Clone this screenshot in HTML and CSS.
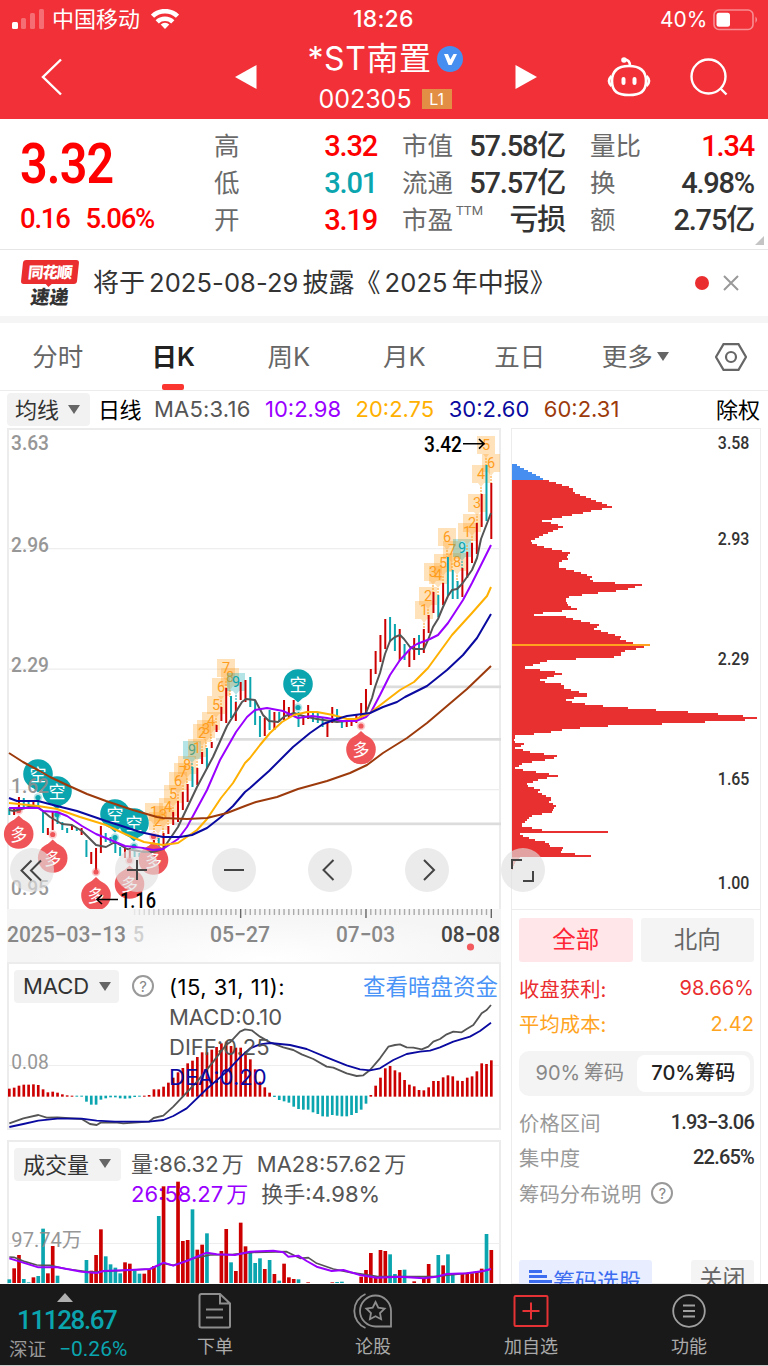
FILE: index.html
```html
<!DOCTYPE html>
<html lang="zh-CN">
<head>
    <meta charset="UTF-8">
    <title>*ST南置 002305</title>
    <link rel="stylesheet" href="styles.css">
</head>
<body>
    <!-- Barra de estado y cabecera -->
    <header class="top">
        <div class="status">
            <svg class="signal" width="32" height="20" viewBox="0 0 32 20">
                <rect x="0" y="13" width="6" height="7" rx="1.5" fill="#fff"/>
                <rect x="9" y="9" width="5" height="11" rx="1.5" fill="#fff" opacity=".3"/>
                <rect x="18" y="4" width="5" height="16" rx="1.5" fill="#fff" opacity=".3"/>
                <rect x="27" y="0" width="5" height="20" rx="1.5" fill="#fff" opacity=".3"/>
            </svg>
            <span class="carrier">中国移动</span>
            <svg class="wifi" width="28" height="20" viewBox="0 0 28 20" fill="none" stroke="#fff" stroke-width="4.600">
                <path d="M1.5 7.2a18 18 0 0 1 25 0"/>
                <path d="M6.2 12.800a11.300 11.300 0 0 1 15.600 0"/>
                <path d="M14 20l-4.300-4.500a6.200 6.200 0 0 1 8.600 0z" fill="#fff" stroke="none"/>
            </svg>
            <span class="time">18:26</span>
            <span class="battery-text">40%</span>
            <svg class="battery" width="46" height="22" viewBox="0 0 46 22">
                <rect x="1" y="1" width="39" height="19.500" rx="5" fill="none" stroke="#fff" stroke-width="1.600" opacity=".45"/>
                <rect x="3.500" y="3.800" width="13.500" height="14" rx="2.500" fill="#fff"/>
                <path d="M42.500 7.500q3 3.200 0 6.500z" fill="#fff" opacity=".5"/>
            </svg>
        </div>
        <div class="nav">
            <svg class="back" width="22" height="38" viewBox="0 0 22 38" fill="none" stroke="#fff" stroke-width="2.400"><path d="M20 1.500L2 19l18 17.500"/></svg>
            <svg class="prev" width="22" height="24" viewBox="0 0 22 24"><path d="M0 12L21.500 0v24z" fill="#fff"/></svg>
            <div class="title">
                <div class="stock-name">*ST南置
                    <svg width="26" height="26" viewBox="0 0 26 26"><circle cx="13" cy="13" r="13" fill="#468ff0"/><path d="M7 8h4l2.300 5.500L16.500 8h3.500l-5.500 11h-3z" fill="#fff"/></svg>
                </div>
                <div class="stock-code">002305 <span class="level">L1</span></div>
            </div>
            <svg class="next" width="22" height="24" viewBox="0 0 22 24"><path d="M22 12L.5 0v24z" fill="#fff"/></svg>
            <svg class="robot" width="44" height="40" viewBox="0 0 44 40" fill="none" stroke="#fff" stroke-width="2.600">
                <path d="M22 9c10 0 17 4 17 15s-6 14-17 14S5 35 5 24 12 9 22 9z"/>
                <path d="M4.500 19q-5 5 0 10M39.500 19q5 5 0 10M23 9q0-6-5-6.500"/>
                <circle cx="17" cy="3" r="1.500" fill="#fff"/>
                <path d="M16.500 22v4M27.500 22v4" stroke-width="4" stroke-linecap="round"/>
            </svg>
            <svg class="search" width="38" height="38" viewBox="0 0 38 38" fill="none" stroke="#fff" stroke-width="2.400"><circle cx="18.500" cy="18.500" r="17"/><path d="M30 30l6.500 6.500"/></svg>
        </div>
    </header>

    <!-- Cotización -->
    <section class="quote">
        <div class="price">
            <div class="last">3.32</div>
            <div class="change"><span>0.16</span><span>5.06%</span></div>
        </div>
        <dl>
            <dt>高</dt><dd class="up">3.32</dd>
            <dt>低</dt><dd class="down">3.01</dd>
            <dt>开</dt><dd class="up">3.19</dd>
        </dl>
        <dl>
            <dt>市值</dt><dd>57.58亿</dd>
            <dt>流通</dt><dd>57.57亿</dd>
            <dt>市盈<sup>TTM</sup></dt><dd>亏损</dd>
        </dl>
        <dl>
            <dt>量比</dt><dd class="up">1.34</dd>
            <dt>换</dt><dd>4.98%</dd>
            <dt>额</dt><dd>2.75亿</dd>
        </dl>
        <i class="corner"></i>
    </section>

    <section class="notice">
        <div class="brand"><b>同花顺</b><em>速递</em></div>
        <p>将于<span>2025-08-29</span>披露《<span>2025</span>年中报》</p>
        <i class="dot"></i>
        <svg width="16" height="16" viewBox="0 0 16 16" stroke="#999" stroke-width="2"><path d="M1 1l14 14M15 1L1 15"/></svg>
    </section>

    <!-- Periodos -->
    <nav class="tabs">
        <a>分时</a>
        <a class="active">日K</a>
        <a>周K</a>
        <a>月K</a>
        <a>五日</a>
        <a>更多<i class="caret"></i></a>
        <a class="settings">
            <svg width="32" height="28" viewBox="0 0 32 28" fill="none" stroke="#666" stroke-width="2.200"><path d="M8.500 1.200h15L31 14l-7.500 12.800h-15L1 14z"/><circle cx="16" cy="14" r="5"/></svg>
        </a>
    </nav>

    <div class="ma-row">
        <span class="select">均线<i class="caret"></i></span>
        <span class="period">日线</span>
        <span class="ma5">MA5:3.16</span>
        <span class="ma10">10:2.98</span>
        <span class="ma20">20:2.75</span>
        <span class="ma30">30:2.60</span>
        <span class="ma60">60:2.31</span>
        <span class="adjust">除权</span>
    </div>

    <main class="board">
        <div class="left">
            <div class="kline">
                <svg id="kline" width="494" height="481" viewBox="7 428 494 481"></svg>
                <div class="tools">
                    <button><svg viewBox="0 0 44 44"><path d="M21.500 12.500L11.500 22.500l10 10M31 12.500L21 22.500l10 10"/></svg></button>
                    <button><svg viewBox="0 0 44 44"><path d="M12 22h20M22 12v20"/></svg></button>
                    <button><svg viewBox="0 0 44 44"><path d="M12 22h20"/></svg></button>
                    <button><svg viewBox="0 0 44 44"><path d="M25.500 12L15.500 22l10 10"/></svg></button>
                    <button><svg viewBox="0 0 44 44"><path d="M19 12l10 10-10 10"/></svg></button>
                    <button><svg viewBox="0 0 44 44"><path d="M11 21V12h10M32 23v10H22" stroke-width="2.600"/></svg></button>
                </div>
            </div>
            <svg id="axis" class="axis" width="494" height="53" viewBox="7 909 494 53"></svg>

            <div class="panel macd">
                <svg id="macd" class="plot" width="494" height="168" viewBox="21 21 1482 504"></svg>
                <span class="select">MACD<i class="caret"></i></span>
                <span class="help">?</span>
                <div class="values">
                    <div class="params">(15, 31, 11):</div>
                    <div>MACD:0.10</div>
                    <div>DIFF:0.25</div>
                    <div class="ma30">DEA:0.20</div>
                </div>
                <a class="link">查看暗盘资金</a>
            </div>

            <div class="panel volume">
                <svg id="volume" class="plot" width="494" height="143" viewBox="21 15 1482 429"></svg>
                <span class="select">成交量<i class="caret"></i></span>
                <div class="values">
                    <div><span>量:86.32 万</span><span>MA28:57.62 万</span></div>
                    <div><span class="ma10">26:58.27 万</span><span>换手:4.98%</span></div>
                </div>
            </div>
        </div>

        <!-- Distribución de fichas -->
        <aside class="right">
            <svg id="chips" class="chips" width="250" height="482" viewBox="18 -6 750 1446"></svg>
            <div class="chip-info">
                <div class="switch"><span class="on">全部</span><span>北向</span></div>
                <div class="row profit"><span>收盘获利:</span><span class="num">98.66%</span></div>
                <div class="row cost"><span>平均成本:</span><span class="num">2.42</span></div>
                <div class="segment"><span>90% 筹码</span><span class="on">70%筹码</span></div>
                <div class="row gray"><span>价格区间</span><b>1.93−3.06</b></div>
                <div class="row gray"><span>集中度</span><b>22.65%</b></div>
                <div class="row gray explain"><span>筹码分布说明</span><span class="help">?</span></div>
                <div class="actions">
                    <span class="pick"><svg width="24" height="24" viewBox="0 0 24 24" fill="#3c6df0"><path d="M0 1h13v3H0zM0 6h18v3H0zM0 11h23v3H0zM0 16h16v3H0z"/></svg>筹码选股</span>
                    <span class="close">关闭</span>
                </div>
            </div>
        </aside>
    </main>

    <footer class="bottom">
        <div class="index">
            <i class="arrow"></i>
            <div class="point">11128.67</div>
            <div class="rate"><span>深证</span>−0.26%</div>
        </div>
        <a>
            <svg width="34" height="36" viewBox="0 0 34 36" fill="none" stroke="#8e8e8e" stroke-width="2"><path d="M1.500 3q0-2 2-2H22l10 9.500V33q0 1.500-1.500 1.500h-27q-2 0-2-1.500zM22 1v9.500h10M8 16.500h17M8 24.500h17"/></svg>
            下单
        </a>
        <a>
            <svg width="40" height="36" viewBox="0 0 40 36" fill="none" stroke="#8e8e8e" stroke-width="1.800"><path d="M22.500 2.500A15.500 15.500 0 0 0 22.500 33.500H38V18A15.500 15.500 0 0 0 22.500 2.500zM12.500 1a18.500 18.500 0 0 0 0 34"/><path d="M22.500 9l2.800 5.700 6.300.9-4.600 4.400 1.100 6.200-5.600-2.900-5.600 2.900 1.100-6.200-4.600-4.400 6.300-.9z"/></svg>
            论股
        </a>
        <a>
            <svg width="36" height="36" viewBox="0 0 36 36" fill="none" stroke="#e63234" stroke-width="2"><rect x="1.500" y="3" width="33" height="30" rx="1"/><path d="M9.500 18h17M18 9.500v17"/></svg>
            加自选
        </a>
        <a>
            <svg width="36" height="36" viewBox="0 0 36 36" fill="none" stroke="#a0a0a0" stroke-width="1.800"><circle cx="18" cy="18" r="15.800"/><path d="M12 12.500h12M12 18h12M12 23.500h12"/></svg>
            功能
        </a>
    </footer>

    <script src="charts.js"></script>
</body>
</html>
```
FILE: styles.css
```css
* {
    box-sizing: border-box;
}

body {
    margin: 0;
    width: 768px;
    height: 1366px;
    overflow: hidden;
    display: flex;
    flex-direction: column;
    background-color: #fff;
    color: #333;
    font-family: Inter, "Noto Sans CJK SC", sans-serif;
    font-size: 22px;
}

svg {
    display: block;
    flex-shrink: 0;
}

i, em {
    font-style: normal;
}

/* Cabecera */
.top {
    height: 119px;
    background-color: #f13038;
    color: #fff;
}

.status {
    display: grid;
    grid-template-columns: 40px 98px 203px 304px 55px 46px;
    height: 39px;
    padding-left: 12px;
    align-items: center;
    line-height: 39px;
}

.signal {
    margin-top: -1px;
}

.wifi {
    margin-left: 1px;
    margin-top: -2px;
}

.time {
    font-size: 23px;
    font-weight: 500;
    letter-spacing: 0.2px;
}

.battery-text {
    font-size: 21px;
    margin-left: 3px;
}

.battery {
    margin-left: 1px;
}

.nav {
    display: grid;
    grid-template-columns: 195px 65px 250px 95px 82px 40px;
    height: 80px;
    padding-left: 41px;
    align-items: center;
}

.nav > svg {
    margin-top: -4px;
}

.nav .prev {
    margin-left: -1px;
}

.nav .next {
    margin-left: -36px;
    justify-self: start;
}

.nav .robot {
    margin-left: -39px;
}

.nav .search {
    margin-left: -38px;
}

.title {
    width: 168px;
    height: 80px;
    text-align: center;
}

.stock-name {
    display: flex;
    align-items: center;
    justify-content: center;
    gap: 5px;
    height: 40px;
    font-size: 32px;
    line-height: 38px;
    letter-spacing: 0.6px;
}

.stock-code {
    display: flex;
    align-items: center;
    justify-content: center;
    gap: 10px;
    height: 40px;
    font-size: 25px;
}

.level {
    width: 30px;
    height: 20px;
    background-color: #e28e45;
    font-size: 16px;
    line-height: 20px;
}

/* Cotización */
.quote {
    position: relative;
    display: grid;
    grid-template-columns: 170px 164px 164px 165px;
    column-gap: 24px;
    height: 131px;
    padding: 9px 0 0 20px;
    border-bottom: 1px solid #e6e6e6;
    font-family: Roboto, "Noto Sans CJK SC", sans-serif;
}

.last {
    height: 72px;
    font-size: 55px;
    font-weight: 600;
    line-height: 72px;
    letter-spacing: -1px;
    color: #fe0000;
    transform: scaleX(0.88);
    transform-origin: left;
}

.change {
    display: flex;
    gap: 16px;
    font-size: 28px;
    font-weight: 500;
    line-height: 37px;
    letter-spacing: -1.200px;
    color: #fe0000;
    transform: scaleX(0.98);
    transform-origin: left;
}

.quote dl {
    display: grid;
    grid-template-columns: 52px 1fr;
    grid-auto-rows: 37px;
    margin: 0;
    line-height: 37px;
}

.quote dt {
    font-size: 25.500px;
    color: #6a6a6a;
    white-space: nowrap;
}

.quote dt sup {
    margin-left: 3px;
    font-size: 13px;
    line-height: 0;
    vertical-align: 14px;
}

.quote dd {
    margin: 0;
    padding-right: 1px;
    font-size: 29px;
    font-weight: 500;
    letter-spacing: -1.2px;
    text-align: right;
    white-space: nowrap;
}

.up {
    color: #fe0000;
}

.down {
    color: #0aa5ae;
}

.corner {
    position: absolute;
    right: 4px;
    bottom: 4px;
    border-style: solid;
    border-width: 0 0 9px 9px;
    border-color: transparent transparent #c4c4c4;
}

/* Aviso */
.notice {
    display: flex;
    align-items: center;
    height: 73px;
    padding: 0 29px 0 22px;
    border-bottom: 7px solid #f5f5f5;
}

.notice p {
    flex: 1;
    margin: -5px 0 0 15px;
    font-size: 26px;
    white-space: nowrap;
}

.notice p span {
    margin: 0 4px;
    font-size: 25.500px;
    letter-spacing: 0.100px;
}

.notice .dot {
    width: 14px;
    height: 14px;
    margin-right: 14px;
    border-radius: 50%;
    background-color: #ea2e30;
}

.brand {
    width: 56px;
    font-family: "Noto Sans CJK SC", sans-serif;
    font-weight: 900;
    text-align: center;
}

.brand b {
    display: block;
    height: 24px;
    background-color: #ea2e30;
    border-radius: 3px;
    color: #fff;
    font-size: 15.500px;
    line-height: 23px;
    letter-spacing: -1px;
    transform: skewX(-6deg);
}

.brand b::after {
    content: "";
    display: block;
    width: 0;
    margin: 0 auto;
    border: 4px solid transparent;
    border-top-color: #ea2e30;
}

.brand em {
    display: block;
    height: 22px;
    font-size: 19px;
    line-height: 23px;
    transform: skewX(-8deg);
}

/* Pestañas */
.tabs {
    display: grid;
    grid-template-columns: repeat(6, 115.500px) 1fr;
    height: 68px;
    border-bottom: 1px solid #ececec;
    color: #666;
    font-size: 25.500px;
    line-height: 68px;
    text-align: center;
}

.tabs .active {
    display: flex;
    flex-direction: column;
    align-items: center;
    color: #222;
    font-weight: 600;
}

.tabs .active::after {
    content: "";
    width: 22px;
    height: 6px;
    margin-top: -7px;
    border-radius: 2px;
    background-color: #fb3530;
}

.tabs .settings {
    display: flex;
    align-items: center;
    justify-content: center;
}

.caret {
    display: inline-block;
    border: 6px solid transparent;
    border-top: 9px solid #666;
    border-bottom: 0;
}

.tabs .caret {
    margin-left: 4px;
    vertical-align: 5px;
}

.select {
    display: flex;
    align-items: center;
    gap: 10px;
    height: 33px;
    padding: 0 0 2px 9px;
    border-radius: 4px;
    background-color: #f2f2f2;
    color: #333;
}

.select .caret {
    margin-top: 2px;
}

.ma-row {
    display: flex;
    align-items: center;
    height: 37px;
    padding: 0 8px 0 7px;
    white-space: nowrap;
}

.ma-row span {
    margin: -2px 14.500px 0 0;
}

.ma-row .select {
    width: 83px;
    margin: 0 8px 0 0;
    gap: 9px;
    padding: 0 0 3px 8px;
}

.ma-row .period {
    color: #000;
    margin: -4px 13px 0 0;
    letter-spacing: -0.5px;
}

.ma-row .ma5 {
    letter-spacing: 0.2px;
}

.ma-row .adjust {
    margin: -4px 0 0 auto;
    color: #000;
}

.ma5 {
    color: #555;
}

.ma10 {
    color: #9a00ff;
}

.ma20 {
    color: #ffb000;
}

.ma30 {
    color: #0a0aa0;
}

.ma60 {
    color: #9c3a0c;
}

/* Gráficos */
.board {
    flex: 1;
    min-height: 0;
    display: flex;
    gap: 10px;
    padding: 0 7px;
    overflow: hidden;
}

.left {
    width: 494px;
    flex-shrink: 0;
}

.kline {
    position: relative;
    height: 481px;
    border: 2px solid #ececec;
    border-bottom: 0;
}

.kline > svg {
    margin: -2px;
    overflow: visible;
}

/* botones flotantes sobre el gráfico */
.tools {
    position: absolute;
    left: 0.500px;
    bottom: 17px;
    z-index: 2;
    display: flex;
    gap: 52.500px;
}

.tools button {
    width: 44px;
    height: 44px;
    padding: 0;
    border: 0;
    border-radius: 50%;
    background-color: rgba(224, 224, 224, 0.65);
}

.tools button:first-child {
    margin-right: 9.300px;
}

.tools path {
    fill: none;
    stroke: #444;
    stroke-width: 2;
}

.axis {
    position: relative;
    background: radial-gradient(ellipse at 260px 50px, #fff, #f5f5f5 240px);
}

.panel {
    position: relative;
    display: flex;
    border: 2px solid #ececec;
    white-space: nowrap;
}

.plot {
    position: absolute;
    left: -2px;
    top: -2px;
}

.macd {
    height: 168px;
    padding: 6px 0 0 5px;
}

.volume {
    height: 160px;
    margin-top: 10px;
    padding: 6px 0 0 5px;
}

.panel .select {
    position: relative;
    width: 105px;
}

.volume .select {
    width: 107px;
    padding-bottom: 4px;
}

.help {
    width: 22px;
    height: 22px;
    border: 2px solid #999;
    border-radius: 50%;
    color: #888;
    font-size: 15px;
    line-height: 19px;
    text-align: center;
}

.macd .help {
    margin: 5px 15px 0 13px;
}

.values {
    position: relative;
    line-height: 30px;
    color: #555;
    padding-top: 2px;
}

.params {
    color: #000;
    letter-spacing: 0.5px;
}

.volume .values {
    margin: -1px 0 0 10px;
    word-spacing: -3px;
}

.volume .values span {
    margin-right: 13px;
}

.link {
    position: relative;
    margin-left: auto;
    margin-right: 1px;
    font-size: 22.500px;
    line-height: 33px;
    color: #4a94f7;
}

.right {
    width: 250px;
    flex-shrink: 0;
    border: 1px solid #ececec;
}

.chips {
    margin: -1px;
    border-bottom: 1px solid #ececec;
    shape-rendering: crispEdges;
}

.chip-info {
    padding: 9px 6px 0 7px;
}

.switch {
    display: grid;
    grid-template-columns: 1fr 1fr;
    gap: 8px;
    margin-bottom: 8px;
    font-size: 23.500px;
    line-height: 43px;
    height: 44px;
    text-align: center;
}

.switch span {
    border-radius: 3px;
    background-color: #f4f4f4;
    color: #666;
}

.switch .on {
    background-color: #ffe7e9;
    color: #ff2436;
}

.row {
    display: flex;
    justify-content: space-between;
    align-items: center;
    height: 35.500px;
    font-size: 20.300px;
    letter-spacing: 0.1px;
}

.row .num {
    margin-top: 1px;
    font-size: 20px;
    letter-spacing: 0.1px;
}

.row b {
    color: #333;
    font-family: Roboto, sans-serif;
    font-weight: 500;
    font-size: 20px;
    letter-spacing: -0.8px;
}

.profit {
    color: #ea2e30;
}

.cost {
    color: #ffa41f;
}

.gray {
    color: #999;
}

.segment {
    display: grid;
    grid-template-columns: 1fr 1fr;
    height: 45px;
    margin: 10px 0 8px;
    padding: 4px;
    border-radius: 10px;
    background-color: #f4f4f4;
    font-size: 20px;
    line-height: 37px;
    text-align: center;
    word-spacing: -2px;
    color: #888;
}

.segment .on {
    border-radius: 8px;
    background-color: #fff;
    color: #222;
    font-weight: 500;
}

.explain {
    justify-content: flex-start;
    gap: 10px;
}

.explain .help {
    letter-spacing: 0;
}

.actions {
    display: flex;
    justify-content: space-between;
    height: 44px;
    margin-top: 49px;
    line-height: 36px;
}

.pick {
    display: flex;
    align-items: center;
    width: 133px;
    padding: 0 0 2px 10px;
    border-radius: 3px;
    background-color: #e8eeff;
    color: #3c6df0;
}

.close {
    width: 63px;
    border-radius: 3px;
    background-color: #f4f4f4;
    color: #666;
    font-size: 23px;
    text-align: center;
}

/* Barra inferior */
.bottom {
    display: grid;
    grid-template-columns: 136px repeat(4, 158px);
    height: 82px;
    background-color: #191919;
    border-bottom: 1px solid #ccc;
    position: relative;
    z-index: 3;
}

.bottom a {
    display: flex;
    flex-direction: column;
    align-items: center;
    padding-top: 9px;
    color: #aaa;
    font-size: 18px;
    line-height: 36px;
}

.index {
    color: #0aa5ae;
    font-family: Roboto, "Noto Sans CJK SC", sans-serif;
    white-space: nowrap;
}

.index .arrow {
    display: block;
    width: 0;
    margin: 9px 0 0 57px;
    border: 8px solid transparent;
    border-bottom: 9px solid #b0b0b0;
    border-top: 0;
}

.point {
    padding-left: 17px;
    font-size: 26px;
    font-weight: 500;
    line-height: 36px;
    letter-spacing: -1.4px;
}

.rate {
    padding-left: 9px;
    font-size: 21px;
    line-height: 22px;
}

.rate span {
    margin-right: 13px;
    color: #999;
    font-size: 18.500px;
}
```
FILE: charts.js
```js
const RED = '#cc0000';
const TEAL = '#0aa5ae';

function fill(id, parts) {
    document.getElementById(id).innerHTML = parts.join('');
}

function line(points, color, width) {
    return `<polyline points="${points}" fill="none" stroke="${color}" stroke-width="${width}" stroke-linejoin="round"/>`;
}

function rect(x, y, w, h, color) {
    return `<rect x="${x}" y="${y}" width="${w}" height="${h}" fill="${color}"/>`;
}

function label(x, y, text, len, size, color, extra = '') {
    return `<text x="${x}" y="${y}" textLength="${len}" lengthAdjust="spacingAndGlyphs" font-family="Roboto, Noto Sans CJK SC, sans-serif" font-size="${size}" fill="${color}" ${extra}>${text}</text>`;
}

// Velas: color, máximo, mínimo
const candles = `t808,815 r807,815 r797,811 t798,808 t802,808 r800,808 t798,807 t810,833 r828,835 r812,830
t813,824 t822,830 t828,833 r825,830 t828,831 r828,835 t840,857 r852,864 r848,870 r826,853
t833,842 t837,843 t840,853 t847,856 r848,858 r848,858 t850,857 t853,857 r850,857 r848,856
r840,857 t838,853 r833,858 r826,834 r812,825 r801,822 r792,810 r784,802 t767,787 r768,785
r752,764 t748,769 r742,748 r725,732 r707,721 r688,723 t696,718 r702,721 r682,700 r680,702
t677,707 t700,725 t716,737 r718,736 t710,730 r712,730 t712,722 r700,720 r707,718 r700,717
t712,727 r715,725 r705,719 t713,722 t713,723 t718,727 r723,737 r707,723 t709,720 t720,728
r720,727 r718,726 r715,723 r703,719 r689,713 r669,685 r651,674 r635,662 r619,649 t617,642
t624,651 r629,661 t644,660 r650,667 r638,660 t635,655 r629,653 r615,633 r592,613 t595,617
r583,605 t557,596 t570,599 t581,599 r568,597 r552,578 r543,563 r523,554 r494,527 t465,521 r483,539`.split(/\s+/);

const ma = [
    ['#555', '9,810 14,811 29,807 38,807 50,817 62,824 72,825 82,831 96,845 106,847 115,842 127,849 144,852 153,852 163,849 178,827 197,787 213,757 227,726 242,702 246,699 255,700 263,715 269,721 278,722 285,716 294,713 303,716 317,719 337,722 356,720 366,713 372,698 375,687 380,673 385,654 390,641 395,637 400,635 404,639 410,647 414,649 424,649 428,640 433,627 438,619 443,607 448,596 452,590 457,589 462,584 472,570 477,558 481,539 491,513'],
    ['#9a00ff', '9,808 38,808 43,811 57,812 67,816 82,826 96,834 113,841 125,846 143,848 153,850 163,849 178,839 187,827 207,790 220,760 236,732 247,717 255,710 267,708 283,711 298,718 312,716 327,718 342,721 356,721 366,717 371,712 380,695 390,675 400,660 412,647 417,644 430,639 438,635 448,623 463,600 472,583 481,565 491,545'],
    ['#ffb000', '9,803 38,806 57,809 80,817 106,825 125,834 144,842 163,845 178,843 197,830 207,819 221,798 233,783 245,763 250,758 260,745 270,733 282,722 294,715 307,712 317,712 333,715 347,719 356,719 370,713 383,703 400,690 414,682 428,668 452,635 472,613 487,596 491,587'],
    ['#0a0aa0', '9,798 17,801 38,801 57,806 77,811 106,821 125,827 140,832 163,837 180,837 192,835 207,828 221,817 233,806 245,792 250,788 269,771 293,747 310,733 323,724 337,719 347,716 370,713 383,707 397,702 405,697 427,686 447,670 463,655 477,638 491,614'],
    ['#9c3a0c', '9,753 23,762 38,770 50,777 67,785 87,794 106,801 133,810 157,817 163,818 187,819 207,818 227,813 245,806 256,802 277,797 298,789 327,781 350,773 367,765 383,753 407,738 427,723 447,706 467,689 491,666']
];

// Secuencias numeradas: x, y, número
const marks = [
    [154, 812, 1], [158, 821, 2], [163, 815, 3], [168, 807, 4], [173, 794, 5], [178, 781, 6], [183, 772, 7], [187, 765, 8], [192, 750, 9],
    [197, 748, 1], [202, 733, 2], [206, 729, 3], [211, 721, 4], [216, 705, 5], [221, 687, 6], [226, 668, 7], [230, 677, 8], [236, 682, 9],
    [424, 610, 1], [428, 596, 2], [433, 572, 3], [438, 575, 4], [443, 563, 5], [447, 537, 6], [452, 550, 7], [457, 562, 8], [462, 548, 9],
    [467, 532, 1], [472, 523, 2], [477, 503, 3], [481, 474, 4], [486, 445, 5], [491, 463, 6]
];

function mark([x, y, n]) {
    const c = n === 9 ? TEAL : '#ff9d1c';
    return `<path d="M${x - 9} ${y - 9}h18v18h-6l-3 4-3-4h-6z" fill="${c}" opacity=".3"/>
        <path d="M${x} ${y + 13}v7" stroke="${c}" stroke-dasharray="2 1"/>
        <text x="${x}" y="${y + 5}" font-family="Roboto, sans-serif" font-size="14.500" text-anchor="middle" fill="${c}">${n}</text>`;
}

// dir = 1: el punto queda debajo del círculo
function pin(x, y, dir) {
    const c = dir > 0 ? TEAL : '#ef5558';
    const t = dir > 0 ? '空' : '多';
    return `<circle cx="${x}" cy="${y}" r="14.800" fill="${c}"/>
        <path d="M${x - 6} ${y + 13 * dir}L${x} ${y + 18.500 * dir}L${x + 6} ${y + 13 * dir}z" fill="${c}"/>
        <circle cx="${x}" cy="${y + 23.500 * dir}" r="4.300" fill="${c}" opacity=".3"/>
        <circle cx="${x}" cy="${y + 23.500 * dir}" r="2.600" fill="${c}"/>
        <text x="${x}" y="${y + 6.500}" font-family="Noto Sans CJK SC" font-size="17" text-anchor="middle" fill="#fff">${t}</text>`;
}

const k = [];
[548.5, 669, 789.5].forEach(y => k.push(rect(8, y - 0.5, 492, 1.3, '#eee')));
k.push(rect(376, 685.5, 125, 2.700, '#dcdcdc'), rect(216, 738, 285, 2.700, '#dcdcdc'), rect(173, 822.5, 328, 2.700, '#dcdcdc'));
marks.forEach(m => k.push(mark(m)));
candles.forEach((c, i) => {
    const [top, low] = c.slice(1).split(',').map(Number);
    k.push(rect(9.300 + i * 4.820 - 1, top, 2, low - top, c[0] === 'r' ? RED : TEAL));
});
[[38, 774], [57, 791], [115, 814], [134, 823], [298, 684]].forEach(p => k.push(pin(p[0], p[1], 1)));
[[18.700, 834], [52.700, 858], [96, 895.5], [129.5, 884], [153.5, 860], [361, 749.5]].forEach(p => k.push(pin(p[0], p[1], -1)));
ma.forEach(m => k.push(line(m[1], m[0], 2)));
[['3.63', 450], ['2.96', 552], ['2.29', 672], ['1.62', 793], ['0.95', 895]].forEach(t => k.push(label(11, t[1], t[0], 38, 21, '#8c8c8c', 'font-weight="500" opacity=".9"')));
k.push(label(424, 452, '3.42', 38, 22, '#000', 'font-weight="500"'));
k.push('<path d="M463 443.800h21M479 439l5 4.800-5 4.800" fill="none" stroke="#000" stroke-width="1.600"/>');
k.push(label(120, 907.5, '1.16', 36, 22, '#000', 'font-weight="500"'));
k.push('<path d="M118 899.500H97M102 895l-5 4.500 5 4.500" fill="none" stroke="#000" stroke-width="1.600"/>');
fill('kline', k);

// Eje de fechas
const a = [];
for (let i = 26; i <= 100; i++) {
    const major = [48, 74, 100].includes(i);
    a.push(`<rect x="${9.300 + i * 4.820 - 0.700}" y="909" width="1.400" height="${major ? 9 : 6}" fill="${major ? '#666' : '#aaa'}" opacity="${Math.min(1, (i - 24) / 10)}"/>`);
}
a.push(label(7, 942, '2025−03−13', 119, 22, '#888', 'font-weight="500"'));
a.push(label(133, 942, '5', 11, 22, '#d0d0d0', 'font-weight="500"'));
a.push(label(210, 942, '05−27', 60, 22, '#888', 'font-weight="500"'));
a.push(label(336, 942, '07−03', 59, 22, '#888', 'font-weight="500"'));
a.push(label(441, 942, '08−08', 59, 22, '#444', 'font-weight="500"'));
a.push('<circle cx="470.500" cy="947" r="3.600" fill="#f25a5e"/>');
fill('axis', a);

// MACD
const macd = [24, 27, 33, 36, 36, 37, 35, 22, 13, 15, 12, 7, 4, 3, -3, -3, -18, -27, -27, -12, -8, -5, -5, -8, -9, -8, -4, -3, 3, 5,
    22, 22, 30, 42, 57, 73, 86, 100, 108, 119, 133, 133, 141, 149, 160, 165, 152, 147, 147, 135, 112, 82, 45, 28, 12, -4, -13, -17, -21, -33,
    -40, -42, -42, -50, -55, -62, -63, -58, -60, -62, -62, -58, -52, -42, -24, 5, 33, 57, 85, 92, 79, 73, 50, 36, 31, 20, 19, 28, 47, 47,
    58, 64, 61, 48, 47, 57, 61, 76, 100, 98, 109];
const m = [rect(21, 330, 1482, 3, '#eee')];
macd.forEach((v, i) => m.push(rect(28 + i * 14.460 - 4, v > 0 ? 425 - v : 422, 8, Math.abs(v), v > 0 ? RED : TEAL)));
m.push(line('28,505 70,490 115,480 140,488 172,487 245,492 270,507 290,510 302,503 345,502 370,505 447,500 461,489 490,482 520,455 591,380 640,320 678,270 690,262 720,230 735,223 755,226 780,245 810,262 850,277 880,285 905,298 940,312 980,335 1000,338 1040,355 1070,363 1090,361 1110,345 1140,310 1165,275 1185,270 1200,268 1220,277 1240,278 1265,283 1285,275 1300,260 1320,252 1340,238 1360,230 1385,232 1400,222 1420,210 1445,175 1460,165 1473,150', '#555', 5.5));
m.push(line('28,516 70,507 115,497 172,491 245,491 290,497 345,500 447,500 490,495 520,483 560,460 620,402 680,350 720,307 750,280 780,268 810,264 870,270 920,282 980,307 1040,331 1080,343 1110,346 1140,340 1180,315 1220,297 1260,290 1290,287 1320,277 1360,260 1410,245 1440,228 1473,203', '#0a0aa0', 5.5));
m.push(label(34, 343, '0.08', 112, 62, '#8c8c8c', 'opacity=".9"'));
fill('macd', m);

// Volumen: altura superior de cada barra, 0 = fuera de la vista
const volume = `t433 r400 r360 t432 t442 r427 t423 t281 r415 r333 t422 0 0 0 0 0 t375 r407 r360 r283 t364 t388 t398 t415 r382 r386 t407 t416 r416 r402
r393 t243 r154 0 0 r140 r318 r315 t223 r344 r329 t295 0 0 r348 r282 t382 r408 r263 r334 t352 t384 t370 r402 t375 r417 t437 r386 r427 r432
t433 0 r442 0 0 0 0 r442 t441 t440 0 0 0 r425 r405 r354 r425 r345 r348 t358 t417 r405 t404 0 r439 0 r430 r387 0 t360
r391 t358 t417 0 r417 r415 r415 r410 r401 t297 r345`.split(/\s+/);
const v = [rect(21, 324, 1482, 3, '#eee')];
volume.forEach((b, i) => {
    if (b === '0') return;
    const top = Number(b.slice(1));
    v.push(rect(28 + i * 14.460 - 5.500, top, 11, 450 - top, b[0] === 'r' ? RED : TEAL));
});
v.push(label(34, 337, '97.74万', 212, 62, '#8c8c8c', 'opacity=".9"'));
v.push(line('28,366 42,367 75,380 110,390 150,391 200,402 270,411 340,408 450,402 491,385 520,391 580,370 630,360 700,358 760,352 860,350 900,370 925,368 950,385 1000,402 1050,412 1130,424 1230,425 1300,425 1350,420 1440,411 1473,402', '#555', 5));
v.push(line('28,370 60,380 115,397 172,397 245,410 290,414 310,408 390,405 450,402 491,383 520,392 560,378 620,353 650,358 705,360 750,350 820,347 850,352 865,365 895,362 920,378 950,395 995,408 1030,405 1080,420 1130,428 1200,425 1270,430 1310,425 1340,417 1400,415 1450,408 1473,402', '#9a00ff', 6));
fill('volume', v);

// Perfil de fichas: y, x
const profile = [[102, 28], [150, 120], [175, 205], [187, 205], [232, 325], [240, 270], [248, 240], [258, 185], [264, 157], [273, 110], [280, 140], [290, 178],
    [300, 150], [310, 125], [335, 72], [345, 95], [355, 130], [368, 197], [378, 185], [388, 190], [395, 162], [412, 162], [425, 215], [440, 262], [452, 252],
    [459, 330], [465, 410], [477, 370], [485, 320], [492, 250], [503, 180], [528, 190], [538, 220], [546, 140], [554, 68], [560, 180], [570, 215], [585, 283],
    [597, 268], [620, 347], [628, 345], [642, 395], [652, 420], [665, 350], [680, 348], [686, 230], [692, 130], [715, 45], [725, 120], [733, 180], [745, 130],
    [756, 95], [766, 175], [778, 177], [799, 262], [805, 215], [815, 176], [828, 260], [835, 340], [845, 480], [852, 600], [858, 680], [865, 765], [872, 740],
    [880, 580], [886, 450], [892, 280], [900, 190], [910, 130], [921, 30], [938, 25], [946, 60], [957, 30], [972, 85], [979, 158], [990, 140], [1003, 55],
    [1019, 25], [1027, 80], [1040, 163], [1052, 100], [1068, 58], [1083, 105], [1090, 98], [1110, 143], [1118, 128], [1130, 152], [1150, 138], [1160, 80],
    [1190, 45], [1203, 110], [1205, 310], [1212, 310], [1214, 45], [1218, 45], [1235, 95], [1243, 143], [1248, 115], [1258, 182], [1268, 160], [1275, 210], [1281, 258], [1286, 258]];

function profileAt(y) {
    const n = profile.findIndex(p => p[0] >= y);
    if (n < 1) return profile[0][1];
    const [y0, x0] = profile[n - 1];
    const [y1, x1] = profile[n];
    return x0 + (x1 - x0) * (y - y0) / (y1 - y0);
}

const c = [rect(18, -6, 3, 1446, '#ececec'), rect(18, -6, 750, 3, '#ececec'), rect(765, -6, 3, 1446, '#ececec')];
for (let y = 102; y < 1284; y += 6) {
    c.push(rect(21, y, Math.round(profileAt(y + 3) - 21), 6, y < 150 ? '#468ff0' : '#e93030'));
}
c.push('<path d="M21 1284h24q-20 14-24 42z" fill="#e93030" opacity=".6"/>');
c.push(rect(21, 643, 414, 6, '#ffa21f'));
[['3.58', 57], ['2.93', 345], ['2.29', 706], ['1.65', 1067], ['1.00', 1380]].forEach(t => c.push(label(639, t[1], t[0], 95, 54, '#333', 'font-weight="500"')));
fill('chips', c);
```
